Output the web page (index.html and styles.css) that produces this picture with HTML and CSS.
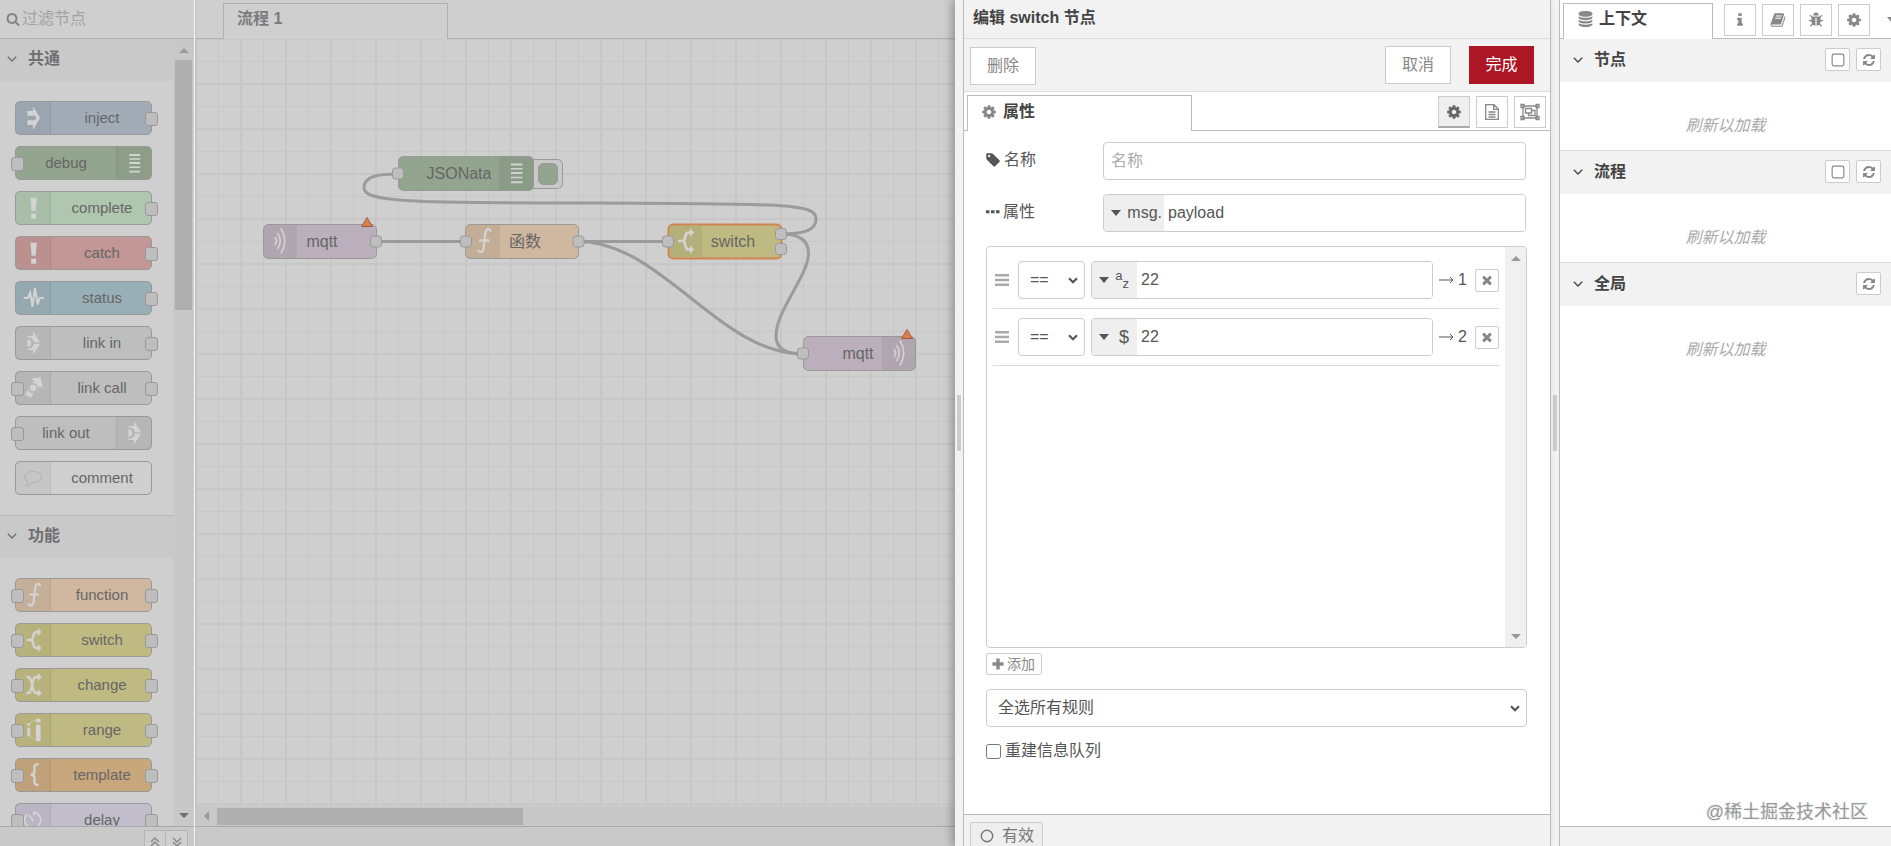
FILE: index.html
```html
<!DOCTYPE html>
<html lang="zh-CN">
<head>
<meta charset="utf-8">
<title>Node-RED</title>
<link rel="stylesheet" href="styles.css">
</head>
<body>
<svg class="sprite" aria-hidden="true">
  <symbol id="cog" viewBox="0 0 1792 1792"><path d="M1152 896q0-106-75-181t-181-75-181 75-75 181 75 181 181 75 181-75 75-181zm512-109v222q0 12-8 23t-20 13l-185 28q-19 54-39 91 35 50 107 138 10 12 10 25t-9 23q-27 37-99 108t-94 71q-12 0-26-9l-138-108q-44 23-91 38-16 136-29 186-7 28-36 28h-222q-14 0-24.500-8.500t-11.500-21.500l-28-184q-49-16-90-37l-141 107q-10 9-25 9-14 0-25-11-126-114-165-168-7-10-7-23 0-12 8-23 15-21 51-66.500t54-70.500q-27-50-41-99l-183-27q-13-2-21-12.500t-8-23.500v-222q0-12 8-23t19-13l186-28q14-46 39-92-40-57-107-138-10-12-10-24 0-10 9-23 26-36 98.500-107.500t94.500-71.500q13 0 26 10l138 107q44-23 91-38 16-136 29-186 7-28 36-28h222q14 0 24.500 8.500t11.500 21.500l28 184q49 16 90 37l142-107q9-9 24-9 13 0 25 10 129 119 165 170 7 8 7 22 0 12-8 23-15 21-51 66.500t-54 70.500q26 50 41 98l183 28q13 2 21 12.500t8 23.500z"/></symbol>
  <symbol id="search" viewBox="0 0 1792 1792"><path d="M1216 832q0-185-131.500-316.500t-316.500-131.500-316.500 131.500-131.500 316.500 131.500 316.500 316.500 131.500 316.500-131.500 131.500-316.500zm512 832q0 52-38 90t-90 38q-54 0-90-38l-343-342q-179 124-399 124-143 0-273.500-55.500t-225-150-150-225-55.500-273.500 55.500-273.500 150-225 225-150 273.500-55.500 273.500 55.500 225 150 150 225 55.500 273.500q0 220-124 399l343 343q37 37 37 90z"/></symbol>
  <symbol id="refresh" viewBox="0 0 1792 1792"><path d="M1639 1056q0 5-1 7-64 268-268 434.500t-478 166.500q-146 0-282.500-55t-243.500-157l-129 129q-19 19-45 19t-45-19-19-45v-448q0-26 19-45t45-19h448q26 0 45 19t19 45-19 45l-137 137q71 66 161 102t187 36q134 0 250-65t186-179q11-17 53-117 8-23 30-23h192q13 0 22.500 9.500t9.500 22.500zm25-800v448q0 26-19 45t-45 19h-448q-26 0-45-19t-19-45 19-45l138-138q-148-137-349-137-134 0-250 65t-186 179q-11 17-53 117-8 23-30 23h-199q-13 0-22.500-9.500t-9.500-22.500v-7q65-268 270-434.500t480-166.500q146 0 284 55.500t245 156.500l130-129q19-19 45-19t45 19 19 45z"/></symbol>
  <symbol id="database" viewBox="0 0 1792 1792"><path d="M896 768q237 0 443-43t325-127v170q0 69-103 128t-280 93.500-385 34.500-385-34.500-280-93.500-103-128v-170q119 84 325 127t443 43zm0 768q237 0 443-43t325-127v170q0 69-103 128t-280 93.500-385 34.500-385-34.500-280-93.500-103-128v-170q119 84 325 127t443 43zm0-384q237 0 443-43t325-127v170q0 69-103 128t-280 93.500-385 34.500-385-34.500-280-93.500-103-128v-170q119 84 325 127t443 43zm0-1152q208 0 385 34.500t280 93.500 103 128v128q0 69-103 128t-280 93.500-385 34.500-385-34.500-280-93.500-103-128v-128q0-69 103-128t280-93.500 385-34.500z"/></symbol>
  <symbol id="tag" viewBox="100 0 1792 1792"><path d="M576 448q0-53-37.500-90.500t-90.500-37.500-90.500 37.500-37.500 90.500 37.500 90.500 90.500 37.500 90.500-37.500 37.500-90.500zm1067 576q0 53-37 90l-491 492q-39 37-91 37-53 0-90-37l-715-716q-38-37-64.500-101t-26.500-117v-416q0-52 38-90t90-38h416q53 0 117 26.500t102 64.500l715 714q37 39 37 91z"/></symbol>
  <symbol id="times" viewBox="0 0 1792 1792"><path d="M1490 1322q0 40-28 68l-136 136q-28 28-68 28t-68-28l-294-294-294 294q-28 28-68 28t-68-28l-136-136q-28-28-28-68t28-68l294-294-294-294q-28-28-28-68t28-68l136-136q28-28 68-28t68 28l294 294 294-294q28-28 68-28t68 28l136 136q28 28 28 68t-28 68l-294 294 294 294q28 28 28 68z"/></symbol>
  <symbol id="bug" viewBox="0 0 1792 1792"><path d="M1696 960q0 26-19 45t-45 19h-224q0 171-67 290l208 209q19 19 19 45t-19 45q-18 19-45 19t-45-19l-198-197q-5 5-15 13t-42 28.500-65 36.500-82 29-97 13v-896h-128v896q-51 0-101.500-13.500t-87-33-66-39-43.500-32.500l-15-14-183 207q-20 21-48 21-24 0-43-16-19-18-20.500-44.500t15.500-46.500l202-227q-58-114-58-274h-224q-26 0-45-19t-19-45 19-45 45-19h224v-294l-173-173q-19-19-19-45t19-45 45-19 45 19l173 173h844l173-173q19-19 45-19t45 19 19 45-19 45l-173 173v294h224q26 0 45 19t19 45zm-480-576h-640q0-133 93.500-226.500t226.500-93.500 226.500 93.500 93.500 226.500z"/></symbol>
  <symbol id="info" viewBox="0 0 1792 1792"><path d="M1216 1344v128q0 26-19 45t-45 19h-512q-26 0-45-19t-19-45v-128q0-26 19-45t45-19h64v-384h-64q-26 0-45-19t-19-45v-128q0-26 19-45t45-19h384q26 0 45 19t19 45v576h64q26 0 45 19t19 45zm-128-1152v192q0 26-19 45t-45 19h-256q-26 0-45-19t-19-45v-192q0-26 19-45t45-19h256q26 0 45 19t19 45z"/></symbol>
  <symbol id="book" viewBox="0 0 1792 1792"><path d="M1703 478q40 57 18 129l-275 906q-19 64-76.500 107.500t-122.500 43.500h-923q-77 0-148.500-53.500t-99.500-131.500q-24-67-2-127 0-4 3-27t4-37q1-8-3-21.500t-3-19.500q2-11 8-21t16.500-23.500 16.500-23.500q23-38 45-91.500t30-91.500q3-10 .5-30t-.5-28q3-11 17-28t17-23q21-36 42-92t25-90q1-9-2.500-32t.5-28q4-13 22-30.500t22-22.500q19-26 42.500-84.500t27.500-96.500q1-8-3-25.500t-2-26.500q2-8 9-18t18-23 17-21q8-12 16.500-30.500t15-35 16-36 19.500-32 26.500-23.500 36-11.500 47.500 5.500l-1 3q38-9 51-9h761q74 0 114 56t18 130l-274 906q-36 119-71.500 153.500t-128.500 34.500h-869q-27 0-38 15-11 16-1 43 24 70 144 70h923q29 0 56-15.500t35-41.500l300-987q7-22 5-57 38 15 59 43zm-1064 2q-4 13 2 22.500t20 9.500h608q13 0 25.500-9.500t16.500-22.500l21-64q4-13-2-22.500t-20-9.500h-608q-13 0-25.500 9.500t-16.500 22.500zm-83 256q-4 13 2 22.500t20 9.500h608q13 0 25.500-9.500t16.500-22.500l21-64q4-13-2-22.500t-20-9.500h-608q-13 0-25.500 9.500t-16.500 22.500z"/></symbol>
  <symbol id="file" viewBox="0 0 16 18"><path d="M1.700 1.700h8.300l4.300 4.300v10.300h-12.600zM9.700 1.700v4.600h4.600M4.500 9h7M4.500 11.500h7M4.500 14h7" fill="none" stroke="currentColor" stroke-width="1.300"/></symbol>
  <symbol id="group" viewBox="0 0 20 18"><path d="M3 3h14v12h-14zM1 1.500h3v3h-3zM16 1.500h3v3h-3zM1 13.500h3v3h-3zM16 13.500h3v3h-3zM5.500 5.500h6v4.500h-6zM12 7.500h3v5h-6.500v-2" fill="none" stroke="currentColor" stroke-width="1.300"/></symbol>
  <symbol id="plus" viewBox="0 0 12 12"><path d="M4.300 0.500h3.400v3.800h3.800v3.400h-3.800v3.800h-3.400v-3.800h-3.800v-3.400h3.800z"/></symbol>
  <symbol id="square" viewBox="0 0 12 12"><rect x="1" y="1" width="10" height="10" rx="1.500" fill="none" stroke="currentColor"/></symbol>
  <symbol id="circle" viewBox="0 0 14 14"><circle cx="7" cy="7" r="5.700" fill="none" stroke="currentColor" stroke-width="1.400"/></symbol>
  <symbol id="dots" viewBox="0 0 14 4"><path d="M0 .3h3.500v3h-3.500zM5 .3h3.500v3h-3.500zM10 .3h3.500v3h-3.500z"/></symbol>
  <symbol id="chevron" viewBox="0 0 10 6"><path d="M.8.8l4.200 4.200 4.200-4.200" fill="none" stroke="currentColor" stroke-width="1.300"/></symbol>
  <symbol id="chevron-bold" viewBox="0 0 10 7"><path d="M1 1.300l4 4 4-4" fill="none" stroke="currentColor" stroke-width="2.100"/></symbol>
  <symbol id="caret" viewBox="0 0 10 6"><path d="M0 0h10l-5 6z"/></symbol>
  <symbol id="bars" viewBox="0 0 14 12"><path d="M0 0h14v2.400h-14zM0 4.800h14v2.400h-14zM0 9.600h14v2.400h-14z"/></symbol>
  <symbol id="arrow" viewBox="0 0 15 8"><path d="M0 4h14M11 1l3 3-3 3" fill="none" stroke="currentColor"/></symbol>
  <symbol id="up2" viewBox="0 0 10 10"><path d="M1 5l4-4 4 4M1 9l4-4 4 4" fill="none" stroke="currentColor" stroke-width="1.500"/></symbol>
  <symbol id="down2" viewBox="0 0 10 10"><path d="M1 1l4 4 4-4M1 5l4 4 4-4" fill="none" stroke="currentColor" stroke-width="1.500"/></symbol>

  <symbol id="n-inject" viewBox="0 0 35 34"><path d="M11 9.500h6v-5l7.500 12.500-7.500 12.500v-5h-6v-5h8l1.500-2.500-1.500-2.500h-8z"/></symbol>
  <symbol id="n-debug" viewBox="0 0 35 34"><path d="M12 7.500h11.500v2h-11.500zM12 12h11.500v1.500h-11.500zM12 16h11.500v2h-11.500zM12 20.800h11.500v1.400h-11.500zM12 25.200h11.500v2h-11.500z"/></symbol>
  <symbol id="n-alert" viewBox="0 0 35 34"><path d="M14.300 6h6.700l-1.200 14h-4.300zM15 23h5.300v5.500h-5.300z"/></symbol>
  <symbol id="n-status" viewBox="0 0 35 34"><path d="M7 17h4.500l2.500-5.500 2.500 15 2.500-20 3 17.500 2-7h4.500" fill="none" stroke="currentColor" stroke-width="2.200"/></symbol>
  <symbol id="n-link" viewBox="0 0 35 34"><path d="M11 9.500h6v-5l7.500 11.800h-6.500a7 7 0 0 0-7-5.500zM11 24.500h6v5l7.500-11.800h-6.500a7 7 0 0 1-7 5.500zM11 13a4 4 0 0 1 0 8z"/></symbol>
  <symbol id="n-call" viewBox="0 0 35 34"><path d="M14 7.500l11-2 2.500 12-3.500-2.500-1.800 3a5.500 5.500 0 0 0-5.700-6.500l1.500-2.500zM8.500 24l3.200-5.500a5.500 5.500 0 0 0 6 4l-3 5z"/><circle cx="17" cy="17" r="3.400"/></symbol>
  <symbol id="n-comment" viewBox="0 0 35 34"><path d="M17 10c5 0 9 2.500 9 6s-4 6-9 6h-2c-1 2-3 3-5.500 3.200 1.500-1 2-2.500 2-4.200-2-1-3.500-3-3.500-5 0-3.500 4-6 9-6z" fill="none" stroke="#b5b5b5" stroke-width="1.200"/></symbol>
  <symbol id="n-function" viewBox="0 0 35 34"><path d="M24.500 7.500c-.5-3.500-4.500-3.500-5 1.500l-2 15.500c-.7 4.500-4.500 4.500-5.500 1.500M13 16.500h10.500" fill="none" stroke="currentColor" stroke-width="2.300"/></symbol>
  <symbol id="n-switch" viewBox="0 0 35 34"><path d="M10 17h6.500M23 8.500h-2.500c-1.500 0-2 .5-2.500 2l-2 6.500 2 6.500c.5 1.500 1 2 2.500 2h2.500" fill="none" stroke="currentColor" stroke-width="2.600"/><path d="M22 4l4 4.500-4 4.500zM22 21l4 4.500-4 4.500z"/></symbol>
  <symbol id="n-change" viewBox="0 0 35 34"><path d="M10 8.500h1.500c2 0 2.500 1 3 3l3 11c.5 2 1 3 3 3h2.500M10 25.500h1.500c2 0 2.500-1 3-3l3-11c.5-2 1-3 3-3h2.500" fill="none" stroke="currentColor" stroke-width="2.400"/><path d="M22 4l4 4.500-4 4.500zM22 21l4 4.500-4 4.500z"/></symbol>
  <symbol id="n-range" viewBox="0 0 35 34"><path d="M11 9.500h3v3h-3zM11 14.500h3v9.500h-3zM20 5h5v4h-5zM20 11.500h5v17.500h-5z"/><path d="M14.500 9l5-2.500M14.500 24.500l5 3" fill="none" stroke="currentColor" stroke-dasharray="2 1"/></symbol>
  <symbol id="n-template" viewBox="0 0 35 34"><path d="M23 5.500c-4 0-4.500 1-4.500 4v3.500c0 2.500-1 3.500-4 3.500 3 0 4 1 4 3.500v3.500c0 3 .5 4 4.500 4" fill="none" stroke="currentColor" stroke-width="2.500"/></symbol>
  <symbol id="n-delay" viewBox="0 0 35 34"><path d="M10.500 11a8.500 8.500 0 1 0 7.500-2.500M18 8v4M17.500 18l-5-6" fill="none" stroke="currentColor" stroke-width="1.800"/></symbol>
  <symbol id="n-mqtt" viewBox="0 0 35 34"><path d="M12 13q3 4 0 8M14.500 9q5.500 8 0 16M18 4.500q7.500 12.500 0 25" fill="none" stroke="currentColor" stroke-width="1.700"/></symbol>
</svg>

<div class="editor">
  <aside class="palette">
    <div class="palette-search">
      <svg class="i14"><use href="#search"/></svg>
      <input type="text" placeholder="过滤节点" aria-label="过滤节点">
    </div>
    <div class="palette-body">
      <div class="palette-list">
        <section class="category">
          <h3><svg class="chev"><use href="#chevron"/></svg>共通</h3>
          <div class="nodes">
            <div class="node c-blue out"><span class="ico"><svg><use href="#n-inject"/></svg></span><span class="lbl">inject</span></div>
            <div class="node c-green in right"><span class="ico"><svg><use href="#n-debug"/></svg></span><span class="lbl">debug</span></div>
            <div class="node c-mint out"><span class="ico"><svg><use href="#n-alert"/></svg></span><span class="lbl">complete</span></div>
            <div class="node c-red out"><span class="ico"><svg><use href="#n-alert"/></svg></span><span class="lbl">catch</span></div>
            <div class="node c-teal out"><span class="ico"><svg><use href="#n-status"/></svg></span><span class="lbl">status</span></div>
            <div class="node c-grey out"><span class="ico"><svg><use href="#n-link"/></svg></span><span class="lbl">link in</span></div>
            <div class="node c-grey in out"><span class="ico"><svg><use href="#n-call"/></svg></span><span class="lbl">link call</span></div>
            <div class="node c-grey in right"><span class="ico"><svg><use href="#n-link"/></svg></span><span class="lbl">link out</span></div>
            <div class="node c-none"><span class="ico"><svg><use href="#n-comment"/></svg></span><span class="lbl">comment</span></div>
          </div>
        </section>
        <section class="category">
          <h3><svg class="chev"><use href="#chevron"/></svg>功能</h3>
          <div class="nodes">
            <div class="node c-peach in out"><span class="ico"><svg><use href="#n-function"/></svg></span><span class="lbl">function</span></div>
            <div class="node c-olive in out"><span class="ico"><svg><use href="#n-switch"/></svg></span><span class="lbl">switch</span></div>
            <div class="node c-olive in out"><span class="ico"><svg><use href="#n-change"/></svg></span><span class="lbl">change</span></div>
            <div class="node c-olive in out"><span class="ico"><svg><use href="#n-range"/></svg></span><span class="lbl">range</span></div>
            <div class="node c-orange in out"><span class="ico"><svg><use href="#n-template"/></svg></span><span class="lbl">template</span></div>
            <div class="node c-lilac in out"><span class="ico"><svg><use href="#n-delay"/></svg></span><span class="lbl">delay</span></div>
          </div>
        </section>
      </div>
      <div class="vbar dim"><i class="tri up"></i><div class="vtrack"><div class="vthumb"></div></div><i class="tri down dark"></i></div>
    </div>
    <div class="palette-foot">
      <button type="button" aria-label="折叠"><svg><use href="#up2"/></svg></button><button type="button" aria-label="展开"><svg><use href="#down2"/></svg></button>
    </div>
  </aside>

  <main class="workspace">
    <div class="ws-tabs"><div class="ws-tab">流程 1</div></div>
    <svg class="canvas">
      <defs>
        <pattern id="grid" width="45" height="45" patternUnits="userSpaceOnUse">
          <path d="M22 0h1v45h-1zM44 0h1v45h-1zM0 0h1v45h-1zM0 22h45v1h-45zM0 44h45v1h-45zM0 0h45v1h-45z" fill="#c7c7c7"/>
        </pattern>
      </defs>
      <rect width="100%" height="100%" fill="url(#grid)"/>
      <g transform="translate(-196 -39)">
        <g class="wire">
          <path d="M376 241.500H466M578 241.500H668"/>
          <path d="M578 241.500C662 241.500 719 354 803 354"/>
          <path d="M781 234C805 234 816 230 816 219C816 204 790 203.500 590 203C420 202.500 364 203 364 188C364 176 378 174 398 174"/>
          <path d="M781 234C798 234 808.500 240 808.500 253C808.500 276 776 310 776 336C776 350 788 354 803 354"/>
        </g>
        <g class="cnode" transform="translate(263 224)">
          <rect class="box" x=".5" y=".5" width="113" height="34" rx="5" fill="#baafba"/><path class="shade" d="M1 5q0-4 4-4h29v33h-29q-4 0-4-4z"/>
          <use href="#n-mqtt" width="35" height="34"/><text x="59" y="23">mqtt</text>
          <rect class="port" x="107.500" y="12" width="11" height="11" rx="3"/><path class="warn" d="M104-6.500l5.500 9h-11z"/>
        </g>
        <g class="cnode" transform="translate(466 224)">
          <rect class="box" x="-.5" y=".5" width="113" height="34" rx="5" fill="#cfb7a0"/><path class="shade" d="M0 5q0-4 4-4h30v33h-30q-4 0-4-4z"/>
          <use href="#n-function" width="35" height="34"/><text class="ltr" x="43" y="23">函数</text>
          <rect class="port" x="-5.500" y="12" width="11" height="11" rx="3"/><rect class="port" x="107" y="12" width="11" height="11" rx="3"/>
        </g>
        <g class="cnode" transform="translate(398 156)">
          <rect class="btn" x="120.500" y="3.500" width="44" height="29" rx="5"/><rect class="box" x="140.500" y="7.500" width="19" height="21" rx="5" fill="#93a58e"/>
          <rect class="box" x=".5" y=".5" width="135" height="34" rx="5" fill="#93a58e"/><path class="shade" d="M101 1h30q4 0 4 4v25q0 4-4 4h-30z"/>
          <use href="#n-debug" x="101" width="35" height="34"/><text x="61" y="23">JSONata</text>
          <rect class="port" x="-5.500" y="12" width="11" height="11" rx="3"/>
        </g>
        <g class="cnode" transform="translate(668 224)">
          <rect class="box sel" x=".5" y=".5" width="113" height="34" rx="5" fill="#bfba82"/><path class="shade" d="M2 5q0-3 3-3h29v31h-29q-3 0-3-3z"/>
          <use href="#n-switch" width="35" height="34"/><text x="65" y="23">switch</text>
          <rect class="port" x="-5.500" y="12" width="11" height="11" rx="3"/><rect class="port" x="107.500" y="4.500" width="11" height="11" rx="3"/><rect class="port" x="107.500" y="19.500" width="11" height="11" rx="3"/>
        </g>
        <g class="cnode" transform="translate(803 336)">
          <rect class="box" x=".5" y=".5" width="112" height="34" rx="5" fill="#baafba"/><path class="shade" d="M79 1h29q4 0 4 4v25q0 4-4 4h-29z"/>
          <use href="#n-mqtt" x="79" width="35" height="34"/><text x="55" y="23">mqtt</text>
          <rect class="port" x="-5.500" y="12" width="11" height="11" rx="3"/><path class="warn" d="M104-6.500l5.500 9h-11z"/>
        </g>
      </g>
    </svg>
    <div class="hbar"><i class="tri left"></i><div class="hthumb"></div></div>
    <div class="ws-foot"></div>
  </main>

  <section class="tray">
    <div class="grip"><i></i></div>
    <div class="tray-main">
      <header class="tray-title">编辑 switch 节点</header>
      <div class="tray-tools">
        <button type="button" class="btn">删除</button>
        <span class="spacer"></span>
        <button type="button" class="btn up">取消</button>
        <button type="button" class="btn up primary">完成</button>
      </div>
      <div class="tabs">
        <div class="tab"><svg class="i16"><use href="#cog"/></svg>属性</div>
        <span class="spacer"></span>
        <button type="button" class="tbtn on" aria-label="属性"><svg class="i16"><use href="#cog"/></svg></button>
        <button type="button" class="tbtn" aria-label="描述"><svg class="i18"><use href="#file"/></svg></button>
        <button type="button" class="tbtn" aria-label="外观"><svg class="i20"><use href="#group"/></svg></button>
      </div>
      <form class="form">
        <div class="row"><label for="name"><svg class="i16"><use href="#tag"/></svg>名称</label><input id="name" class="field" type="text" placeholder="名称"></div>
        <div class="row"><label for="prop"><svg class="idots"><use href="#dots"/></svg>属性</label>
          <div class="field typed"><button type="button" class="type wide"><svg class="caret"><use href="#caret"/></svg>msg.</button><input id="prop" type="text" value="payload"></div></div>
        <div class="rules">
          <ol class="rule-list">
            <li><svg class="drag"><use href="#bars"/></svg>
              <div class="pick"><select aria-label="运算符"><option>==</option></select><svg class="sv"><use href="#chevron-bold"/></svg></div>
              <div class="field typed"><button type="button" class="type"><svg class="caret"><use href="#caret"/></svg><span class="az"><span>a</span><span>z</span></span></button><input type="text" value="22" aria-label="值"></div>
              <span class="port-no"><svg><use href="#arrow"/></svg>1</span>
              <button type="button" class="mini" aria-label="删除"><svg class="i14"><use href="#times"/></svg></button></li>
            <li><svg class="drag"><use href="#bars"/></svg>
              <div class="pick"><select aria-label="运算符"><option>==</option></select><svg class="sv"><use href="#chevron-bold"/></svg></div>
              <div class="field typed"><button type="button" class="type"><svg class="caret"><use href="#caret"/></svg><span class="dollar">$</span></button><input type="text" value="22" aria-label="值"></div>
              <span class="port-no"><svg><use href="#arrow"/></svg>2</span>
              <button type="button" class="mini" aria-label="删除"><svg class="i14"><use href="#times"/></svg></button></li>
          </ol>
          <div class="vbar"><i class="tri up"></i><div class="vtrack"></div><i class="tri down"></i></div>
        </div>
        <button type="button" class="add"><svg><use href="#plus"/></svg>添加</button>
        <div class="pick full"><select aria-label="规则"><option>全选所有规则</option></select><svg class="sv"><use href="#chevron-bold"/></svg></div>
        <label class="check"><input type="checkbox">重建信息队列</label>
      </form>
      <footer class="tray-foot"><button type="button" class="state"><svg><use href="#circle"/></svg>有效</button></footer>
    </div>
  </section>

  <div class="grip side"><i></i></div>

  <aside class="sidebar">
    <div class="side-tabs">
      <div class="side-tab"><svg><use href="#database"/></svg>上下文</div>
      <button type="button" class="tbtn" aria-label="信息"><svg class="i16"><use href="#info"/></svg></button>
      <button type="button" class="tbtn" aria-label="帮助"><svg class="i16"><use href="#book"/></svg></button>
      <button type="button" class="tbtn" aria-label="调试"><svg class="i16"><use href="#bug"/></svg></button>
      <button type="button" class="tbtn" aria-label="配置"><svg class="i16"><use href="#cog"/></svg></button>
      <svg class="caret more"><use href="#caret"/></svg>
    </div>
    <div class="side-body">
      <section class="ctx"><h3><svg class="chev"><use href="#chevron"/></svg>节点<span class="spacer"></span><button type="button" class="mini" aria-label="自动刷新"><svg class="i14"><use href="#square"/></svg></button><button type="button" class="mini" aria-label="刷新"><svg class="i14"><use href="#refresh"/></svg></button></h3><p>刷新以加载</p></section>
      <section class="ctx"><h3><svg class="chev"><use href="#chevron"/></svg>流程<span class="spacer"></span><button type="button" class="mini" aria-label="自动刷新"><svg class="i14"><use href="#square"/></svg></button><button type="button" class="mini" aria-label="刷新"><svg class="i14"><use href="#refresh"/></svg></button></h3><p>刷新以加载</p></section>
      <section class="ctx"><h3><svg class="chev"><use href="#chevron"/></svg>全局<span class="spacer"></span><button type="button" class="mini" aria-label="刷新"><svg class="i14"><use href="#refresh"/></svg></button></h3><p>刷新以加载</p></section>
    </div>
    <div class="side-foot"></div>
    <div class="mark">@稀土掘金技术社区</div>
  </aside>
</div>
</body>
</html>
```

FILE: styles.css
```css
* { box-sizing: border-box; }
body { margin: 0; font: 16px/20px "Liberation Sans", "Noto Sans CJK SC", sans-serif; color: #555; }
button, input, select { font: inherit; color: inherit; margin: 0; padding: 0; border: 0; outline: 0; }
svg { display: block; flex: none; fill: currentColor; }
.sprite { position: absolute; width: 0; height: 0; }
.spacer { flex: 1; }
.i14 { width: 14px; height: 14px; }
.i16 { width: 16px; height: 16px; }
.i18 { width: 16px; height: 18px; }
.i20 { width: 20px; height: 18px; }
.chev { width: 10px; height: 6px; }
.caret { width: 10px; height: 6px; }

.editor { display: flex; height: 100vh; overflow: hidden; background: #f2f2f2; }

/* palette */
.palette { width: 196px; flex: none; display: flex; flex-direction: column; background: #cfcfcf; color: #6f6f6f; border-right: 1px solid #bdbdbd; box-shadow: inset -1px 0 #f8f8f8; padding-right: 1px; }
.palette-search { height: 39px; flex: none; display: flex; align-items: center; gap: 2px; padding-left: 6px; border-bottom: 1px solid #b0b0b0; color: #858585; }
.palette-search input { flex: 1; min-width: 0; background: none; }
.palette-search input::placeholder { color: #a3a3a3; }
.palette-body { flex: 1; min-height: 0; display: flex; }
.palette-list { flex: 1; overflow: hidden; }
.category h3 { margin: 0; height: 42px; display: flex; align-items: center; gap: 11px; padding: 0 0 2px 7px; background: #c9c9c9; font-size: 16px; font-weight: bold; }
.category + .category { border-top: 1px solid #b9b9b9; }
.nodes { display: flex; flex-direction: column; gap: 11px; padding: 20px 21px 20px 15px; }
.node { position: relative; display: flex; height: 34px; border: 1px solid #999; border-radius: 5px; font-size: 15px; color: #666; }
.node.right { flex-direction: row-reverse; }
.ico { width: 35px; background: rgba(0, 0, 0, .04); border-right: 1px solid rgba(0, 0, 0, .06); color: #d3d3d3; }
.right .ico { border-right: 0; border-left: 1px solid rgba(0, 0, 0, .06); }
.ico svg { width: 35px; height: 32px; }
.lbl { flex: 1; text-align: center; line-height: 32px; padding-left: 2px; }
.right .lbl { padding-left: 0; }
.in::before, .out::after { content: ""; position: absolute; top: 10px; width: 11px; height: 12px; border: 1px solid #999; border-radius: 3px; background: #bebebe; }
.in::before { left: -5px; }
.out::after { right: -7px; }
.c-blue { background: #a2acb7; }
.c-green { background: #93a58e; }
.c-mint { background: #afc6af; }
.c-red { background: #c29795; }
.c-teal { background: #99afb7; }
.c-grey { background: #bebebe; }
.c-none { background: #cfcfcf; }
.c-peach { background: #cfb7a0; }
.c-olive { background: #bfba82; }
.c-orange { background: #c8a77d; }
.c-lilac { background: #c1bdca; }
.palette-foot { height: 20px; flex: none; overflow: hidden; display: flex; justify-content: flex-end; padding: 3px 6px 0 0; background: #c9c9c9; border-top: 1px solid #a9a9a9; }
.palette-foot button { width: 22px; height: 22px; display: flex; justify-content: center; padding-top: 6px; border: 1px solid #b5b5b5; background: #cfcfcf; color: #8a8a8a; }
.palette-foot button + button { border-left: 0; }
.palette-foot svg { width: 10px; height: 10px; }

/* scrollbars */
.vbar { width: 21px; flex: none; display: flex; flex-direction: column; align-items: center; padding: 9px 0 8px; background: #f0f0f0; }
.vbar.dim { background: #c8c8c8; }
.vtrack { flex: 1; width: 17px; padding-top: 7px; }
.vthumb { height: 250px; background: #afafaf; }
.tri { width: 0; height: 0; border: 5px solid transparent; color: #999; }
.tri.up { border-top: 0; border-bottom-color: currentColor; }
.tri.down { border-bottom: 0; border-top-color: currentColor; }
.tri.left { border-left: 0; border-right-color: currentColor; }
.tri.dark { color: #707070; }

/* workspace */
.workspace { flex: 1; min-width: 0; display: flex; flex-direction: column; background: #cfcfcf; }
.ws-tabs { height: 39px; flex: none; padding: 3px 27px 0; border-bottom: 1px solid #b0b0b0; }
.ws-tab { width: 225px; height: 36px; padding: 4px 13px; line-height: 22px; border: 1px solid #b0b0b0; border-bottom: 0; background: #cfcfcf; color: #7c7c7c; font-weight: bold; }
.canvas { flex: 1; min-height: 0; width: 100%; }
.hbar { height: 20px; flex: none; display: flex; align-items: center; gap: 8px; padding-left: 8px; background: #c8c8c8; }
.hthumb { width: 306px; height: 17px; background: #afafaf; }
.ws-foot { height: 20px; flex: none; background: #c9c9c9; border-top: 1px solid #a9a9a9; }
.wire { fill: none; stroke: #9b9b9b; stroke-width: 3; }
.cnode { color: #d3d3d3; }
.box { stroke: #999; }
.sel { stroke: #d08550; stroke-width: 2; }
rect.btn { fill: #c9c9c9; stroke: #999; }
.shade { fill: #000; fill-opacity: .05; }
.port { fill: #bebebe; stroke: #999; }
.warn { fill: #d58149; stroke: #a9594c; }
.cnode text { fill: #666; text-anchor: middle; }
.cnode text.ltr { text-anchor: start; }

/* splitters */
.grip { width: 9px; flex: none; display: flex; align-items: center; justify-content: center; background: #f2f2f2; border-right: 1px solid #bbb; }
.grip i { width: 4px; height: 56px; background: #ccc; }

/* edit tray */
.tray { width: 596px; flex: none; display: flex; position: relative; border-right: 1px solid #bbb; box-shadow: -4px 0 8px rgba(0, 0, 0, .25); }
.tray-main { flex: 1; min-width: 0; display: flex; flex-direction: column; background: #fff; }
.tray-title { height: 39px; padding: 8px 9px; background: #f2f2f2; border-bottom: 1px solid #ddd; font-weight: bold; color: #444; }
.tray-tools { height: 53px; display: flex; align-items: flex-start; padding: 8px 16px 0 6px; background: #f2f2f2; border-bottom: 1px solid #ddd; }
.tray-tools .btn { width: 66px; height: 38px; border: 1px solid #ccc; background: #fff; color: #888; }
.tray-tools .up { margin-top: -1px; }
.tray-tools .primary { width: 65px; margin-left: 18px; background: #ad1625; border-color: #ad1625; color: #fff; }
.tabs { height: 39px; display: flex; align-items: flex-start; gap: 6px; padding: 3px 4px 0 3px; border-bottom: 1px solid #bbb; }
.tab { width: 225px; height: 36px; display: flex; align-items: center; gap: 6px; padding: 0 0 4px 13px; border: 1px solid #bbb; border-bottom: 0; background: #fff; color: #444; font-weight: bold; }
.tab svg { color: #888; }
.tbtn { width: 32px; height: 32px; flex: none; display: flex; align-items: center; justify-content: center; border: 1px solid #ccc; background: #fff; color: #888; }
.tbtn.on { background: #efefef; border-bottom: 2px solid #aaa; color: #666; }
.tabs .tbtn { margin-top: 1px; }

.form { flex: 1; min-height: 0; padding: 11px 23px 0 22px; display: flex; flex-direction: column; align-items: flex-start; }
.row { width: 100%; display: flex; align-items: center; margin-bottom: 14px; padding-right: 1px; }
.row label { width: 117px; display: flex; align-items: center; gap: 2px; padding-bottom: 2px; }
.row label .idots { width: 14px; height: 4px; margin-right: 1px; }
.field { flex: 1; min-width: 0; height: 38px; border: 1px solid #ccc; border-radius: 4px; background: #fff; }
input.field { padding: 0 7px; }
.field::placeholder { color: #aaa; }
.typed { display: flex; overflow: hidden; }
.typed input { flex: 1; min-width: 0; padding-left: 4px; }
.type { width: 45px; flex: none; display: flex; align-items: center; justify-content: space-between; padding: 0 8px 0 7px; background: #efefef; }
.type.wide { width: 60px; padding-right: 2px; }
.az { display: flex; font-size: 13px; line-height: 14px; }
.az span + span { padding-top: 8px; }
.dollar { font-size: 18px; }
.rules { width: 100%; height: 402px; display: flex; border: 1px solid #ccc; border-radius: 4px; overflow: hidden; }
.rule-list { flex: 1; min-width: 0; margin: 0; padding: 5px 6px; list-style: none; }
.rule-list li { display: flex; align-items: center; height: 57px; padding: 0 0 0 2px; border-bottom: 1px solid #ddd; }
.drag { width: 14px; height: 12px; color: #aaa; margin-right: 9px; }
.pick { width: 67px; height: 38px; flex: none; display: grid; align-items: center; }
.pick > * { grid-area: 1 / 1; }
.pick select { width: 100%; height: 38px; appearance: none; padding: 0 11px; border: 1px solid #ccc; border-radius: 4px; background: #fff; }
.sv { width: 10px; height: 7px; justify-self: end; margin-right: 7px; pointer-events: none; }
.pick + .field { margin-left: 6px; }
.port-no { width: 42px; display: flex; align-items: center; gap: 4px; padding-left: 6px; }
.port-no svg { width: 15px; height: 8px; }
.mini { width: 25px; height: 23px; flex: none; display: flex; align-items: center; justify-content: center; border: 1px solid #ccc; border-radius: 2px; background: #fff; color: #888; }
.rule-list .mini { width: 24px; }
.add { height: 22px; display: flex; align-items: center; gap: 3px; margin: 5px 0 14px; padding: 0 6px 0 5px; border: 1px solid #ccc; border-radius: 2px; background: #fff; color: #888; font-size: 14px; }
.add svg { width: 12px; height: 12px; }
.pick.full { width: 100%; }
.check { display: flex; align-items: center; gap: 4px; margin-top: 14px; }
.check input { width: 15px; height: 15px; }
.tray-foot { height: 32px; flex: none; overflow: hidden; padding: 7px 6px 0; background: #f2f2f2; border-top: 1px solid #bbb; }
.state { height: 32px; display: flex; align-items: center; gap: 8px; padding: 0 8px 4px 9px; border: 1px solid #ccc; border-radius: 2px; background: #eee; color: #777; }
.state svg { width: 14px; height: 14px; }

/* sidebar */
.sidebar { width: 331px; flex: none; display: flex; flex-direction: column; position: relative; background: #fff; overflow: hidden; }
.side-tabs { height: 39px; flex: none; display: flex; gap: 6px; padding: 3px 0 0 3px; border-bottom: 1px solid #bbb; }
.side-tab { width: 150px; height: 36px; flex: none; display: flex; align-items: center; gap: 5px; padding: 0 0 5px 13px; margin-right: 5px; border: 1px solid #bbb; border-bottom: 0; background: #fff; color: #444; font-weight: bold; }
.side-tab svg { width: 17px; height: 16px; color: #888; }
.side-tabs .tbtn { margin-top: 1px; }
.more { margin: 14px 0 0 11px; color: #888; }
.side-body { flex: 1; min-height: 0; }
.ctx { border-bottom: 1px solid #ddd; }
.ctx:last-child { border-bottom: 0; }
.ctx h3 { margin: 0; height: 43px; display: flex; align-items: center; padding: 0 10px 2px 13px; background: #f2f2f2; font-size: 16px; color: #444; }
.ctx .chev { margin-right: 11px; }
.ctx .mini + .mini { margin-left: 6px; }
.ctx p { margin: 0; height: 68px; line-height: 88px; text-align: center; font-style: italic; color: #aaa; }
.side-foot { height: 20px; flex: none; background: #f2f2f2; border-top: 1px solid #bbb; }
.mark { position: absolute; right: 23px; bottom: 21px; font-size: 18px; line-height: 26px; color: #999; text-shadow: 0 0 2px #ddd; }
```
